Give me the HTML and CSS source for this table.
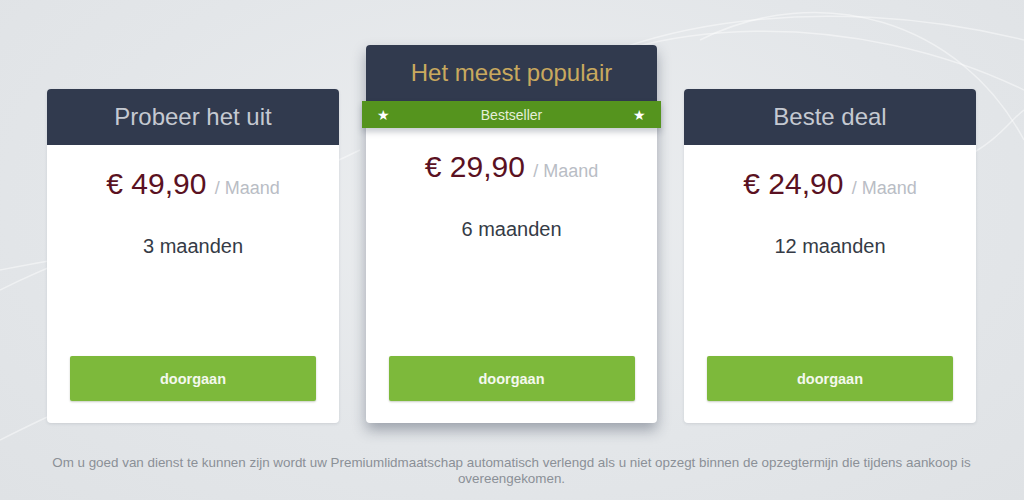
FILE: index.html
```html
<!DOCTYPE html>
<html lang="nl">
<head>
<meta charset="utf-8">
<title>Premium</title>
<link rel="stylesheet" href="styles.css">
</head>
<body>
<svg class="bg-curves" width="1024" height="500" viewBox="0 0 1024 500" aria-hidden="true">
  <path d="M500 120 C 600 20, 820 -10, 1024 40" />
  <path d="M520 100 C 640 10, 860 10, 1024 90" />
  <path d="M700 40 C 820 -20, 960 20, 1024 140" />
  <path d="M0 290 C 120 230, 260 200, 360 150" />
  <path d="M0 270 C 100 250, 200 240, 300 215" />
  <path d="M0 440 C 40 420, 80 400, 120 390" />
  <path d="M960 160 C 1000 140, 1010 120, 1024 110" />
</svg>
<main class="page">
  <section class="plans">
    <article class="card">
      <header class="card-head"><h2 class="card-title">Probeer het uit</h2></header>
      <div class="card-body">
        <p class="price">€ 49,90 <span class="per">/ Maand</span></p>
        <p class="term">3 maanden</p>
        <button class="cta">doorgaan</button>
      </div>
    </article>
    <article class="card card--featured">
      <header class="card-head card-head--featured"><h2 class="card-title card-title--featured">Het meest populair</h2></header>
      <div class="ribbon">
        <span class="star">★</span>
        <span class="ribbon-text">Bestseller</span>
        <span class="star">★</span>
      </div>
      <div class="card-body">
        <p class="price">€ 29,90 <span class="per">/ Maand</span></p>
        <p class="term">6 maanden</p>
        <button class="cta">doorgaan</button>
      </div>
    </article>
    <article class="card">
      <header class="card-head"><h2 class="card-title">Beste deal</h2></header>
      <div class="card-body">
        <p class="price">€ 24,90 <span class="per">/ Maand</span></p>
        <p class="term">12 maanden</p>
        <button class="cta">doorgaan</button>
      </div>
    </article>
  </section>
  <p class="note">Om u goed van dienst te kunnen zijn wordt uw Premiumlidmaatschap automatisch verlengd als u niet opzegt binnen de opzegtermijn die tijdens aankoop is overeengekomen.</p>
</main>
</body>
</html>
```

FILE: styles.css
```css
html, body {
  margin: 0;
  padding: 0;
}
body {
  width: 1024px;
  height: 500px;
  overflow: hidden;
  background: radial-gradient(ellipse at 50% 40%, #eceef0 0%, #e3e6e9 60%, #dfe2e5 100%);
  font-family: "Liberation Sans", Arial, sans-serif;
  position: relative;
}
.bg-curves {
  position: absolute;
  left: 0;
  top: 0;
  pointer-events: none;
}
.bg-curves path {
  fill: none;
  stroke: #ffffff;
  stroke-opacity: 0.45;
  stroke-width: 1.5;
}
.page {
  position: relative;
  padding: 45px 48px 0 47px;
}
.plans {
  display: flex;
  align-items: flex-end;
  gap: 27px;
}
.card {
  width: 292px;
  height: 334px;
  background: #ffffff;
  border-radius: 4px;
  display: flex;
  flex-direction: column;
  box-shadow: 0 1px 3px rgba(40, 50, 70, 0.12);
  position: relative;
}
.card--featured {
  width: 291px;
  height: 378px;
  box-shadow: 0 7px 14px rgba(40, 50, 70, 0.38);
  z-index: 1;
}
.card-head {
  height: 56px;
  background: #313a4e;
  border-radius: 4px 4px 0 0;
  display: flex;
  align-items: center;
  justify-content: center;
}
.card-title {
  margin: 0;
  font-weight: normal;
  font-size: 24px;
  color: #c5c9d1;
}
.card-title--featured {
  color: #c9a95e;
}
.ribbon {
  height: 27px;
  margin: 0 -4px;
  background: #55941e;
  display: flex;
  align-items: center;
  justify-content: space-between;
  padding: 0 15px;
  box-shadow: 0 4px 6px rgba(40, 50, 70, 0.25);
  position: relative;
}
.star {
  color: #ffffff;
  font-size: 14px;
  line-height: 14px;
}
.ribbon-text {
  color: #e6efd9;
  font-size: 14px;
}
.card-body {
  flex: 1;
  display: flex;
  flex-direction: column;
  align-items: center;
  padding: 22px 23px 22px 23px;
}
.price {
  margin: 0;
  font-size: 30px;
  line-height: 34px;
  color: #5a1122;
}
.per {
  font-size: 18px;
  color: #b9bdc5;
}
.term {
  margin: 29px 0 0;
  font-size: 20px;
  line-height: 24px;
  color: #353b46;
}
.cta {
  margin-top: auto;
  width: 246px;
  height: 45px;
  border: 0;
  border-radius: 2px;
  background: #7db93b;
  color: #f4f8ee;
  font-family: "Liberation Sans", Arial, sans-serif;
  font-weight: bold;
  font-size: 14.5px;
  box-shadow: 0 1px 2px rgba(40, 60, 20, 0.25);
}
.note {
  margin: 32px -12px 0;
  text-align: center;
  font-size: 13.4px;
  line-height: 16px;
  color: #8b9097;
}
```
